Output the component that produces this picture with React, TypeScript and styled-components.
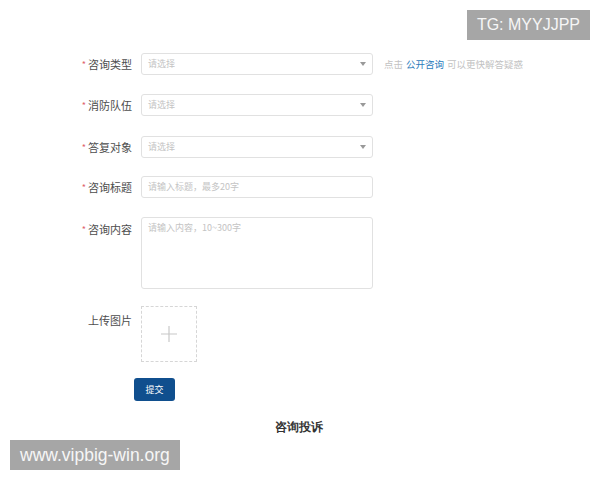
import * as React from "react";
import styled, { createGlobalStyle } from "styled-components";

const GlobalStyle = createGlobalStyle`
  body {
    margin: 0;
    background: #ffffff;
    font-family: "Noto Sans CJK SC", "Noto Sans", sans-serif;
  }
`;

const Page = styled.div`
  position: relative;
  width: 600px;
  height: 480px;
  overflow: hidden;
  background: #fff;
`;

const Form = styled.div`
  display: flex;
  flex-direction: column;
  padding: 53px 0 0 70px;
`;

const Row = styled.div<{ $gap?: number }>`
  display: flex;
  align-items: flex-start;
  gap: 9px;
  margin-bottom: ${(p) => p.$gap ?? 19}px;
`;

const Label = styled.div<{ $top?: number }>`
  width: 62px;
  height: 22px;
  flex-shrink: 0;
  display: flex;
  align-items: center;
  justify-content: flex-end;
  font-size: 11px;
  line-height: 1;
  color: #4d4d4d;
  margin-top: ${(p) => p.$top ?? 0}px;
`;

const Star = styled.span`
  color: #e0636b;
  font-size: 9px;
  margin-right: 2px;
`;

const Field = styled.div<{ $h?: number }>`
  position: relative;
  box-sizing: border-box;
  width: 232px;
  height: ${(p) => p.$h ?? 22}px;
  border: 1px solid #e1e1e1;
  border-radius: 3px;
  padding: 0 6px;
  font-size: 9px;
  line-height: 20px;
  color: #c4c4c4;
  background: #fff;
`;

const Caret = styled.span`
  position: absolute;
  right: 6px;
  top: 8px;
  width: 0;
  height: 0;
  border-left: 3.5px solid transparent;
  border-right: 3.5px solid transparent;
  border-top: 4px solid #999;
`;

const Hint = styled.div`
  margin-left: 2px;
  font-size: 9.5px;
  line-height: 22px;
  color: #c2c2c2;
  white-space: nowrap;
`;

const HintLink = styled.span`
  color: #2b7bbb;
  margin: 0 3px;
`;

const Upload = styled.div`
  box-sizing: border-box;
  width: 56px;
  height: 56px;
  border: 1px dashed #d6d6d6;
  display: flex;
  align-items: center;
  justify-content: center;
`;

const ButtonRow = styled.div`
  display: flex;
  padding-left: 64px;
`;

const Submit = styled.button`
  width: 41px;
  height: 23px;
  border: none;
  border-radius: 3px;
  background: #104f8e;
  color: #fff;
  font-family: inherit;
  font-size: 9px;
  padding: 0;
`;

const Title = styled.div`
  text-align: center;
  font-family: "Liberation Serif", serif;
  font-size: 11.5px;
  font-weight: 600;
  line-height: 16px;
  color: #333;
  margin-top: 18px;
  padding-right: 2px;
`;

const Watermark = styled.div<{ $right?: boolean }>`
  position: absolute;
  ${(p) => (p.$right ? "top: 10px; right: 10px;" : "bottom: 10px; left: 10px;")}
  height: 30px;
  padding: 0 10px;
  background: #a6a6a6;
  color: #f6f6f6;
  font-family: "Liberation Sans", Arial, sans-serif;
  font-size: ${(p) => (p.$right ? 16 : 17.5)}px;
  line-height: 30px;
`;

const selects = [
  { label: "咨询类型", hint: true, gap: 19 },
  { label: "消防队伍", hint: false, gap: 20 },
  { label: "答复对象", hint: false, gap: 18 },
];

export default function App() {
  return (
    <Page>
      <GlobalStyle />
      <Form>
        {selects.map((s) => (
          <Row key={s.label} $gap={s.gap}>
            <Label>
              <Star>*</Star>
              {s.label}
            </Label>
            <Field>
              请选择
              <Caret />
            </Field>
            {s.hint && (
              <Hint>
                点击<HintLink>公开咨询</HintLink>可以更快解答疑惑
              </Hint>
            )}
          </Row>
        ))}
        <Row>
          <Label>
            <Star>*</Star>咨询标题
          </Label>
          <Field>请输入标题，最多20字</Field>
        </Row>
        <Row $gap={17}>
          <Label $top={1}>
            <Star>*</Star>咨询内容
          </Label>
          <Field $h={72}>请输入内容，10~300字</Field>
        </Row>
        <Row $gap={16}>
          <Label $top={3}>上传图片</Label>
          <Upload>
            <svg width="16" height="16" viewBox="0 0 16 16">
              <path d="M8 0v16M0 8h16" stroke="#c8c8c8" strokeWidth="1.2" />
            </svg>
          </Upload>
        </Row>
        <ButtonRow>
          <Submit>提交</Submit>
        </ButtonRow>
      </Form>
      <Title>咨询投诉</Title>
      <Watermark $right>TG: MYYJJPP</Watermark>
      <Watermark>www.vipbig-win.org</Watermark>
    </Page>
  );
}
